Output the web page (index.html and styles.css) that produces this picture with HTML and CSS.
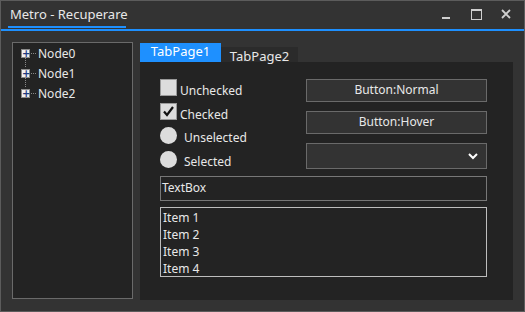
FILE: index.html
```html
<!DOCTYPE html>
<html lang="en">
<head>
    <meta charset="UTF-8">
    <title>Metro - Recuperare</title>
    <link rel="stylesheet" href="styles.css">
</head>
<body>

    <div class="window">
        <!-- Title bar -->
        <div class="titlebar">
            <div class="title">Metro - Recuperare</div>
            <div class="win-buttons">
                <svg class="win-btn" width="30" height="20" viewBox="0 0 30 20">
                    <rect x="11" y="16" width="8" height="2" fill="#cfcfcf"/>
                </svg>
                <svg class="win-btn" width="30" height="20" viewBox="0 0 30 20">
                    <rect x="10.5" y="8.5" width="10" height="10" fill="none" stroke="#cfcfcf"/>
                    <rect x="10" y="8" width="11" height="2" fill="#cfcfcf"/>
                </svg>
                <svg class="win-btn" width="30" height="20" viewBox="0 0 30 20">
                    <path d="M11 9 L19 17 M19 9 L11 17" stroke="#cfcfcf" stroke-width="1.8"/>
                </svg>
            </div>
        </div>
        <div class="accent"></div>

        <div class="content">
            <!-- Tree view -->
            <div class="tree">
                <div class="node">
                    <span class="expander">+</span><span class="dots"></span>Node0
                </div>
                <div class="node">
                    <span class="expander">+</span><span class="dots"></span>Node1
                </div>
                <div class="node">
                    <span class="expander">+</span><span class="dots"></span>Node2
                </div>
            </div>

            <!-- Tab control -->
            <div class="tabs">
                <div class="tab-headers">
                    <div class="tab active">TabPage1</div>
                    <div class="tab">TabPage2</div>
                </div>
                <div class="tab-page">
                    <div class="controls">
                        <div class="choices">
                            <label class="check"><span class="box"></span>Unchecked</label>
                            <label class="check"><span class="box">
                                <svg width="15" height="15" viewBox="0 0 15 15"><path d="M3 7.5 L6 11 L12 3" fill="none" stroke="#111" stroke-width="2.2"/></svg>
                            </span>Checked</label>
                            <label class="radio"><span class="dot"></span>Unselected</label>
                            <label class="radio"><span class="dot"></span>Selected</label>
                        </div>
                        <div class="actions">
                            <div class="button">Button:Normal</div>
                            <div class="button">Button:Hover</div>
                            <div class="combo">
                                <svg width="10" height="7" viewBox="0 0 10 7"><path d="M1 1 L5 5 L9 1" fill="none" stroke="#fff" stroke-width="2"/></svg>
                            </div>
                        </div>
                    </div>
                    <div class="textbox">TextBox</div>
                    <div class="listbox">
                        <div>Item 1</div>
                        <div>Item 2</div>
                        <div>Item 3</div>
                        <div>Item 4</div>
                    </div>
                </div>
            </div>
        </div>
    </div>

</body>
</html>
```

FILE: styles.css
```css
/* General styles */
body {
    margin: 0;
    font-family: "Noto Sans", "Open Sans", sans-serif;
    font-size: 12px;
    color: #e8e8e8;
    background-color: #333;
}

.window {
    width: 525px;
    height: 312px;
    box-sizing: border-box;
    border: 1px solid #5c5c5c;
    background-color: #333;
}

/* Title bar */
.titlebar {
    height: 28px;
    display: flex;
    justify-content: space-between;
}

.title {
    margin-left: 7px;
    padding: 4px 0 0 2px;
    border-bottom: 2px solid #1e90ff;
    box-sizing: border-box;
    height: 27px;
    width: 118px;
    font-size: 13px;
    white-space: nowrap;
}

.win-buttons {
    display: flex;
    margin-right: 3px;
}

.win-btn {
    display: block;
}

.accent {
    height: 2px;
    background-color: #1e90ff;
}

.content {
    display: flex;
    padding: 11px 0 0 11px;
}

/* Tree */
.tree {
    width: 121px;
    height: 257px;
    box-sizing: border-box;
    border: 1px solid #6a6a6a;
    background-color: #232323;
}

.node {
    display: flex;
    align-items: center;
    height: 20px;
    padding-left: 8px;
    position: relative;
}

.node + .node::before {
    content: "";
    position: absolute;
    left: 12px;
    top: -5px;
    height: 9px;
    border-left: 1px dotted #888;
}

.expander {
    width: 9px;
    height: 9px;
    box-sizing: border-box;
    border: 1px solid #8a8a8a;
    background-color: #f0f0f0;
    color: #1f3a80;
    font-family: "DejaVu Sans", sans-serif;
    font-size: 10px;
    font-weight: bold;
    line-height: 7px;
    text-align: center;
}

.dots {
    width: 5px;
    margin: 0 2px 0 1px;
    border-top: 1px dotted #888;
}

/* Tabs */
.tabs {
    margin-left: 7px;
    margin-top: 1px;
    width: 373px;
}

.tab-headers {
    display: flex;
    align-items: flex-end;
    height: 19px;
}

.tab {
    height: 15px;
    width: 77px;
    background-color: #2b2b2b;
    font-size: 13px;
    line-height: 18px;
    text-align: center;
}

.tab.active {
    height: 19px;
    width: 81px;
    background-color: #1e90ff;
    color: #fff;
    line-height: 17px;
}

.tab-page {
    height: 238px;
    background-color: #232323;
    padding: 17px 26px 0 20px;
    box-sizing: border-box;
}

.controls {
    display: flex;
    justify-content: space-between;
    align-items: flex-start;
    height: 90px;
}

.choices {
    display: flex;
    flex-direction: column;
}

.check, .radio {
    display: flex;
    align-items: flex-start;
    height: 24px;
}

.box {
    width: 17px;
    height: 17px;
    box-sizing: border-box;
    border: 1px solid #9a9a9a;
    background-color: #dcdcdc;
    margin-right: 3px;
    display: flex;
    align-items: center;
    justify-content: center;
}

.check {
    line-height: 24px;
}

.radio {
    line-height: 21px;
}

.dot {
    width: 17px;
    height: 17px;
    border-radius: 50%;
    background-color: #dcdcdc;
    margin-right: 7px;
}

.actions {
    width: 181px;
    display: flex;
    flex-direction: column;
    gap: 9px;
}

.button {
    height: 23px;
    box-sizing: border-box;
    border: 1px solid #6a6a6a;
    background-color: #333;
    text-align: center;
    line-height: 20px;
}

.combo {
    height: 26px;
    box-sizing: border-box;
    border: 1px solid #6a6a6a;
    background-color: #333;
    display: flex;
    align-items: center;
    justify-content: flex-end;
    padding-right: 8px;
}

.textbox {
    margin-top: 7px;
    height: 25px;
    box-sizing: border-box;
    border: 1px solid #777;
    padding-left: 1px;
    line-height: 22px;
}

.listbox {
    margin-top: 6px;
    height: 70px;
    box-sizing: border-box;
    border: 1px solid #bdbdbd;
    padding: 1px 0 0 2px;
    line-height: 17px;
}
```
